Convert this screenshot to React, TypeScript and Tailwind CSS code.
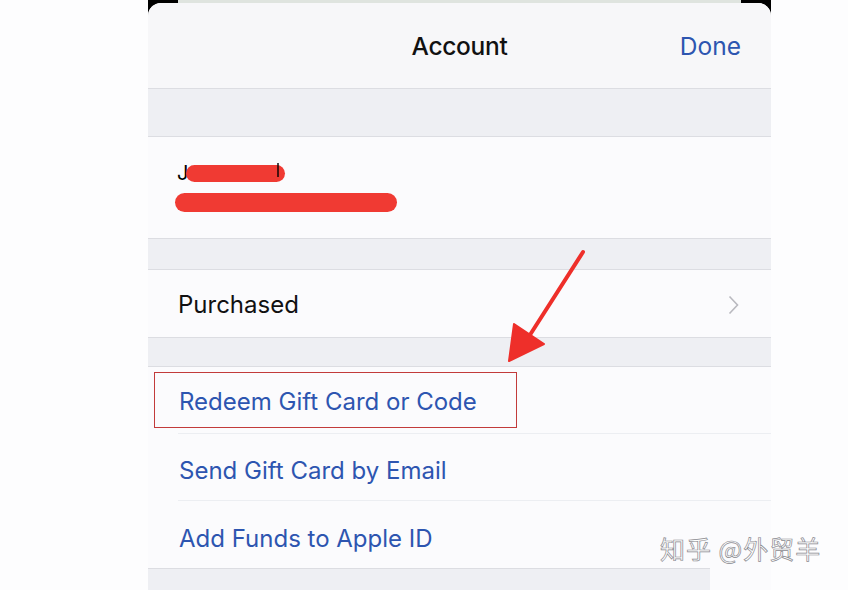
import React from "react";

const font = { fontFamily: "Inter, 'Noto Sans', sans-serif" };

function Gap({ h }: { h: string }) {
  return <div className={`${h} bg-[#eeeff3] border-y border-[#dcdde2]`} />;
}

export default function App() {
  const giftRows = [
    { label: "Redeem Gift Card or Code", boxed: true },
    { label: "Send Gift Card by Email", boxed: false },
    { label: "Add Funds to Apple ID", boxed: false },
  ];

  return (
    <div
      className="relative w-[848px] h-[590px] overflow-hidden bg-[#fdfdfe] flex pl-[148px]"
      style={font}
    >
      <div className="w-[623px] h-full bg-black flex flex-col">
        <div className="h-[3px] mx-[30px] bg-[#dfe4df]" />
        <div className="flex-1 flex flex-col rounded-t-[13px] overflow-hidden bg-[#fbfbfd]">
          {/* nav bar */}
          <div className="h-[85px] shrink-0 bg-[#f7f7f9] flex items-center relative pt-[2px]">
            <div className="flex-1 text-center text-[24.5px] font-medium text-[#111] tracking-[-0.3px]">
              Account
            </div>
            <div className="absolute right-[30px] text-[24.5px] text-[#2d55b0]">Done</div>
          </div>
          <Gap h="h-[49px]" />

          {/* account cell */}
          <div className="h-[101px] shrink-0 flex flex-col justify-center pl-[29px] gap-[10px]">
            <div className="flex items-center h-[20px]">
              <span className="text-[20px] text-black leading-none">J</span>
              <div className="ml-[-2px] w-[99px] h-[17px] rounded-full bg-[#f03a33]" />
              <span className="ml-[-8px] h-[14px] w-[2px] bg-black/70 self-start" />
            </div>
            <div className="ml-[-2px] w-[222px] h-[19px] rounded-full bg-[#f03a33]" />
          </div>
          <Gap h="h-[32px]" />

          {/* purchased */}
          <div className="h-[67px] shrink-0 flex items-center pl-[30px] pr-[32px] pt-[3px]">
            <span className="flex-1 text-[24px] text-[#111]">Purchased</span>
            <svg width="11" height="20" viewBox="0 0 11 20" fill="none">
              <path d="M1.5 1.5 L9.5 10 L1.5 18.5" stroke="#b9b9bf" strokeWidth="1.6" />
            </svg>
          </div>
          <Gap h="h-[30px]" />

          {/* gift card rows */}
          <div className="flex flex-col">
            {giftRows.map((row, i) => (
              <div key={i} className="h-[67px] shrink-0 flex flex-col">
                <div className="flex-1 flex items-center">
                  {row.boxed ? (
                    <div className="ml-[6px] w-[363px] h-[56px] border border-[#c23b3b] flex items-center pl-[24px] pt-[4px]">
                      <span className="text-[24px] text-[#2d55b0]">{row.label}</span>
                    </div>
                  ) : (
                    <span className="pl-[31px] pt-[8px] text-[24px] text-[#2d55b0]">{row.label}</span>
                  )}
                </div>
                {i < giftRows.length - 1 && <div className="ml-[30px] h-px bg-[#eceef2]" />}
              </div>
            ))}
          </div>
          <div className="flex-1 bg-[#eeeff3] border-t border-[#dcdde2]" />
        </div>
      </div>

      {/* red arrow */}
      <svg className="absolute left-[500px] top-[248px]" width="90" height="118" viewBox="0 0 90 118">
        <path d="M83 4 L28 90" stroke="#ee2f2a" strokeWidth="4" strokeLinecap="round" />
        <path d="M9 113 L14 76 L44 96 Z" fill="#ee2f2a" stroke="#ee2f2a" strokeWidth="2" strokeLinejoin="round" />
      </svg>

      {/* watermark */}
      <div className="absolute left-[710px] top-[568px] w-[61px] h-[22px] bg-[#fbfbfd]" />
      <div
        className="absolute left-[660px] top-[530px] text-[25px] text-white tracking-[1px]"
        style={{
          fontFamily: "'Noto Sans CJK SC', sans-serif",
          WebkitTextStroke: "0.7px #8a8a90",
        }}
      >
        知乎 @外贸羊
      </div>
    </div>
  );
}
